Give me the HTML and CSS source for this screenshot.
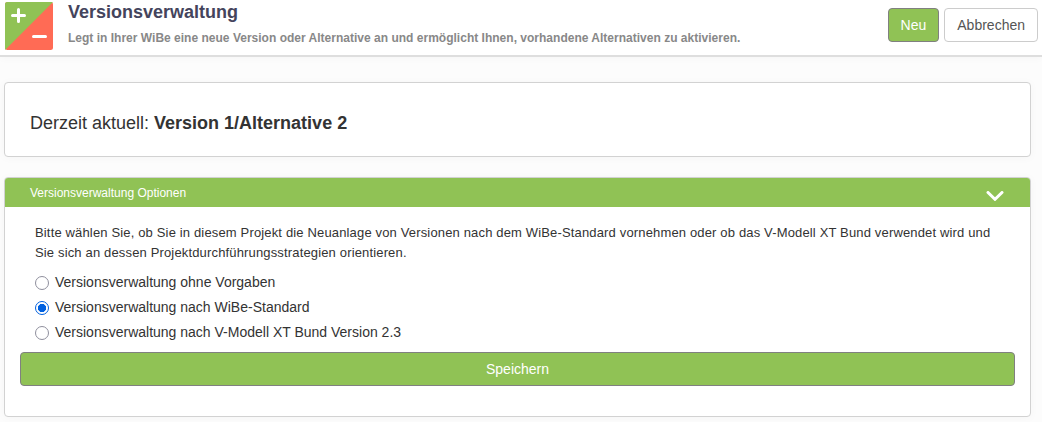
FILE: index.html
```html
<!DOCTYPE html>
<html lang="de">
<head>
    <meta charset="UTF-8">
    <meta name="viewport" content="width=device-width, initial-scale=1.0">
    <title>Versionsverwaltung</title>
    <link rel="stylesheet" href="styles.css">
</head>
<body>
    <header class="page-header">
        <svg class="page-icon" viewBox="0 0 48 48">
            <rect width="48" height="48" rx="2.5" fill="#ff6b55"/>
            <path d="M2.5 0H48L0 48V2.5A2.5 2.5 0 0 1 2.5 0z" fill="#90c255"/>
            <path d="M7.5 13.5h12M13.5 7.5v12M28.5 34.5h12" stroke="#fff" stroke-width="3" stroke-linecap="round"/>
        </svg>
        <div class="page-title">
            <h1>Versionsverwaltung</h1>
            <p>Legt in Ihrer WiBe eine neue Version oder Alternative an und ermöglicht Ihnen, vorhandene Alternativen zu aktivieren.</p>
        </div>
        <div class="page-actions">
            <button type="button" class="btn btn-primary">Neu</button>
            <button type="button" class="btn">Abbrechen</button>
        </div>
    </header>

    <main class="content">
        <section class="panel panel-current">
            Derzeit aktuell: <strong>Version 1/Alternative 2</strong>
        </section>

        <section class="panel">
            <div class="panel-heading">
                <h2>Versionsverwaltung Optionen</h2>
                <svg class="chevron" viewBox="0 0 18 10"><path d="M2 1.5l7 6.8 7-6.8" fill="none" stroke="#fff" stroke-width="3" stroke-linecap="round"/></svg>
            </div>
            <form class="panel-body">
                <p class="hint">Bitte wählen Sie, ob Sie in diesem Projekt die Neuanlage von Versionen nach dem WiBe-Standard vornehmen oder ob das V-Modell XT Bund verwendet wird und Sie sich an dessen Projektdurchführungsstrategien orientieren.</p>
                <label class="option"><input type="radio" name="modus"><span>Versionsverwaltung ohne Vorgaben</span></label>
                <label class="option"><input type="radio" name="modus" checked><span>Versionsverwaltung nach WiBe-Standard</span></label>
                <label class="option"><input type="radio" name="modus"><span>Versionsverwaltung nach V-Modell XT Bund Version 2.3</span></label>
                <button type="button" class="btn btn-primary btn-block">Speichern</button>
            </form>
        </section>
    </main>
</body>
</html>
```

FILE: styles.css
```css
* { box-sizing: border-box; }
body {
    margin: 0; height: 422px; overflow: hidden;
    font-family: "Liberation Sans", Arial, sans-serif;
    font-size: 14px; line-height: 20px;
    color: #333; background-color: #fcfcfc;
}
h1, h2, p { margin: 0; }

/* Kopfbereich */
.page-header {
    display: flex; align-items: flex-start; height: 57px;
    padding: 2px 4px 0 5px; background-color: #fff;
    border-bottom: 2px solid #dedede;
    box-shadow: 0 1px 8px rgba(0, 0, 0, 0.03);
}
.page-icon { width: 48px; height: 48px; margin-right: 15px; flex: none; }
.page-title { flex-grow: 1; }
.page-title h1 { font-size: 18px; line-height: 20px; color: #44445c; }
.page-title p { margin-top: 6px; font-size: 12px; line-height: 20px; font-weight: bold; letter-spacing: 0.01px; color: #888; }
.page-actions { display: flex; gap: 5px; padding-top: 6px; }

.btn {
    height: 34px; padding: 0 12px; font-family: inherit; font-size: 14px; line-height: 20px;
    color: #555; background-color: #fff; border: 1px solid #ccc; border-radius: 4px; cursor: pointer;
}
.btn-primary { color: #fff; background-color: #90c255; border-color: #808080; }
.btn-block { display: block; width: 100%; margin-top: 8px; }

.content { display: flex; flex-direction: column; gap: 20px; padding: 25px 11px 0 4px; }
.panel {
    background-color: #fff; border: 1px solid #d2d2d2; border-radius: 4px;
    box-shadow: 0 1px 10px rgba(0, 0, 0, 0.03);
}
.panel-current { padding: 31px 25px 23px; font-size: 18px; line-height: 19px; }
.panel-heading {
    display: flex; justify-content: space-between; align-items: center;
    height: 29px; padding: 0 26px 0 25px; color: #fff;
    background-color: #90c255; border-radius: 3px 3px 0 0;
}
.panel-heading h2 { font-size: 12px; font-weight: normal; }
.chevron { width: 18px; height: 10px; margin-top: 6px; }
.panel-body { padding: 16px 15px 30px; }
.hint { margin: 0 15px 6px; font-size: 13px; letter-spacing: 0.155px; }

/* Auswahl */
.option { display: flex; align-items: center; height: 25px; padding-left: 15px; }
.option input {
    appearance: none; width: 14px; height: 14px; margin: 2px 6px 0 0;
    border: 1px solid #8f8f9d; border-radius: 50%; background-color: #fff;
}
.option input:checked { border: 1.5px solid #0060df; background: radial-gradient(circle, #0060df 3.9px, #fff 4.4px); }
```
